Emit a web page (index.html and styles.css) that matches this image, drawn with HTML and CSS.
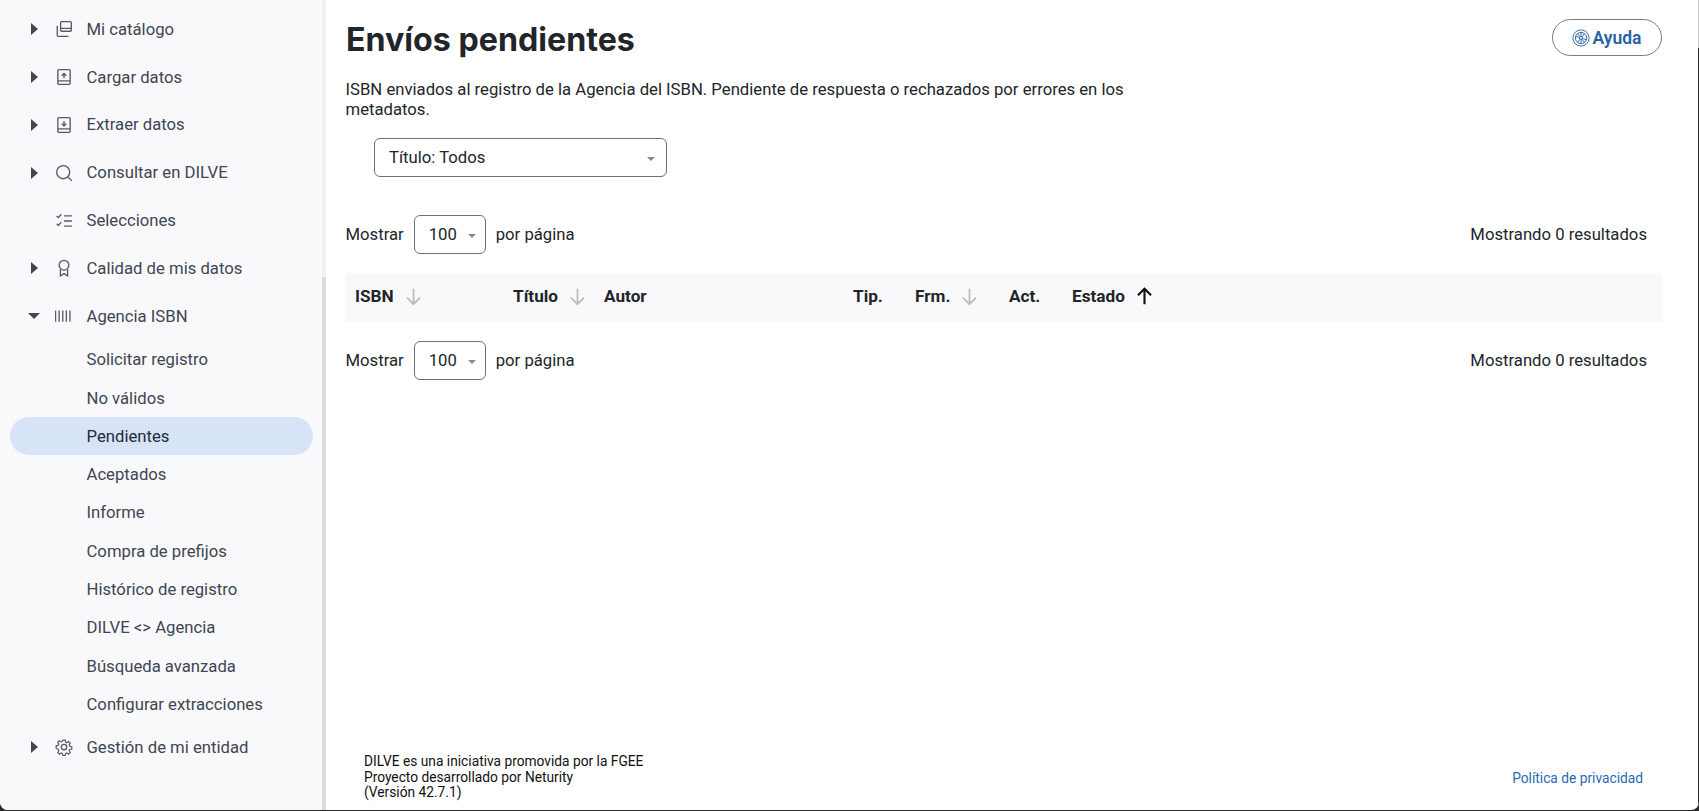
FILE: index.html
```html
<!DOCTYPE html>
<html lang="es">
<head>
<meta charset="utf-8">
<title>Envíos pendientes</title>
<link rel="stylesheet" href="styles.css">
</head>
<body>
<div class="app">
  <aside class="sidebar">
    <nav class="nav">
      <a class="item"><span class="caret"></span><svg class="icon" viewBox="0 0 16 16"><path d="M6 1.500h7.500a1 1 0 0 1 1 1v6.500a1 1 0 0 1-1 1H6a1 1 0 0 1-1-1V2.500a1 1 0 0 1 1-1zM5 7.500h9.500M2 5v8.500a1 1 0 0 0 1 1h9"/></svg><span>Mi catálogo</span></a>
      <a class="item"><span class="caret"></span><svg class="icon" viewBox="0 0 16 16"><path d="M3.500 1.500h9a1 1 0 0 1 1 1v11a1 1 0 0 1-1 1h-9a1 1 0 0 1-1-1v-11a1 1 0 0 1 1-1zM2.500 11.500h11M8 9V5M6 6.800 8 4.800l2 2"/></svg><span>Cargar datos</span></a>
      <a class="item"><span class="caret"></span><svg class="icon" viewBox="0 0 16 16"><path d="M3.500 1.500h9a1 1 0 0 1 1 1v11a1 1 0 0 1-1 1h-9a1 1 0 0 1-1-1v-11a1 1 0 0 1 1-1zM2.500 11.500h11M8 4.500v4M6 6.800l2 2 2-2"/></svg><span>Extraer datos</span></a>
      <a class="item"><span class="caret"></span><svg class="icon" viewBox="0 0 16 16"><circle cx="7.300" cy="7.300" r="5.800"/><path d="m11.500 11.500 3.500 3.500"/></svg><span>Consultar en DILVE</span></a>
      <a class="item"><span class="caret caret-none"></span><svg class="icon" viewBox="0 0 16 16"><path d="M1.500 3.500 3 5l2.500-3M1.500 10.500 3 12l2.500-3M8 3.500h7M8 8h7M8 12.500h7"/></svg><span>Selecciones</span></a>
      <a class="item"><span class="caret"></span><svg class="icon" viewBox="0 0 16 16"><circle cx="8" cy="5.500" r="4.300"/><path d="M4.800 9v6l3.200-2 3.200 2V9"/></svg><span>Calidad de mis datos</span></a>
      <a class="item"><span class="caret caret-open"></span><svg class="icon" viewBox="0 0 16 16"><path d="M.5 3v10M3.700 3v10M6.900 3v10M10.100 3v10M13.300 3v10"/></svg><span>Agencia ISBN</span></a>
      <ul class="sublist">
        <li class="subitem">Solicitar registro</li>
        <li class="subitem">No válidos</li>
        <li class="subitem active">Pendientes</li>
        <li class="subitem">Aceptados</li>
        <li class="subitem">Informe</li>
        <li class="subitem">Compra de prefijos</li>
        <li class="subitem">Histórico de registro</li>
        <li class="subitem">DILVE &lt;&gt; Agencia</li>
        <li class="subitem">Búsqueda avanzada</li>
        <li class="subitem">Configurar extracciones</li>
      </ul>
      <a class="item"><span class="caret"></span><svg class="icon" viewBox="0 0 16 16"><circle cx="8" cy="8" r="2.400"/><path d="M6.800 1h2.400l.4 2.100 1.300.6 1.800-1.200 1.700 1.700-1.200 1.800.6 1.300 2.100.4v2.400l-2.100.4-.6 1.300 1.200 1.800-1.700 1.700-1.800-1.200-1.300.6-.4 2.100H6.800l-.4-2.100-1.300-.6-1.800 1.200-1.700-1.700 1.200-1.800-.6-1.300L0 9.200V6.800l2.100-.4.600-1.300-1.200-1.800 1.700-1.700 1.800 1.200 1.300-.6z" transform="translate(1 1) scale(.875)"/></svg><span>Gestión de mi entidad</span></a>
    </nav>
    <div class="scrollbar"><div class="thumb"></div></div>
  </aside>
  <main class="main">
    <div class="content">
      <header class="head">
        <h1 class="title">Envíos pendientes</h1>
        <a class="help"><svg class="help-icon" viewBox="0 0 16 16"><circle cx="8" cy="8" r="7.200"/><circle cx="8" cy="8" r="5"/><circle cx="8" cy="8" r="1.300"/><path d="M8 3v3.700M8 9.300V13M3.200 6.500l3.600 1.100M9.200 8.400l3.600 1.100M5 12l2.200-3M8.800 7 11 4M5 4l2.200 3M8.800 9l2.200 3"/></svg>Ayuda</a>
      </header>
      <p class="desc">ISBN enviados al registro de la Agencia del ISBN. Pendiente de respuesta o rechazados por errores en los metadatos.</p>
      <div class="filter"><div class="select select-wide"><span>Título: Todos</span><i class="arrow"></i></div></div>
      <div class="pager pager-top">
        <span>Mostrar</span><div class="select select-small"><span>100</span><i class="arrow"></i></div><span>por página</span>
        <span class="count">Mostrando 0 resultados</span>
      </div>
      <div class="thead">
        <div class="th">ISBN<svg class="sort" viewBox="0 0 16 16"><path d="M8 1.500v13M2.500 9 8 14.500 13.500 9"/></svg></div>
        <div class="th">Título<svg class="sort" viewBox="0 0 16 16"><path d="M8 1.500v13M2.500 9 8 14.500 13.500 9"/></svg></div>
        <div class="th">Autor</div>
        <div class="th">Tip.</div>
        <div class="th">Frm.<svg class="sort" viewBox="0 0 16 16"><path d="M8 1.500v13M2.500 9 8 14.500 13.500 9"/></svg></div>
        <div class="th">Act.</div>
        <div class="th">Estado<svg class="sort sort-on" viewBox="0 0 16 16"><path d="M8 14.500v-13M2.500 7 8 1.500 13.500 7"/></svg></div>
      </div>
      <div class="pager pager-bottom">
        <span>Mostrar</span><div class="select select-small"><span>100</span><i class="arrow"></i></div><span>por página</span>
        <span class="count">Mostrando 0 resultados</span>
      </div>
    </div>
    <footer class="footer">
      <div class="credits">DILVE es una iniciativa promovida por la FGEE<br>Proyecto desarrollado por Neturity<br>(Versión 42.7.1)</div>
      <a class="privacy">Política de privacidad</a>
    </footer>
  </main>
</div>
</body>
</html>
```
FILE: styles.css
```css
* { box-sizing: border-box; }
html, body { margin: 0; height: 811px; overflow: hidden; background: #2b2b2b; }
body { font-family: Roboto, "Liberation Sans", sans-serif; font-size: 16.700px; color: #212529; }
.app { position: relative; display: flex; height: 810px; width: 1699px; background: #fff; border-radius: 0 0 8px 8px; overflow: hidden; }
.app::after { content: ""; position: absolute; top: 0; right: 0; bottom: 0; width: 1px; background: linear-gradient(#c4c4c4 48px, #2b2b2b 48px); }
.sidebar { flex: 0 0 326px; display: flex; background: #f9f9fc; }
.nav { flex: 1; padding: 5.500px 0 0 10px; color: #3f4652; }
.item { display: flex; align-items: center; height: 47.800px; }
.caret { width: 0; height: 0; margin-left: 21px; margin-right: 17px; border-left: 7px solid #3f4652; border-top: 6px solid transparent; border-bottom: 6px solid transparent; }
.caret-none { border-color: transparent; }
.caret-open { margin-left: 18px; margin-right: 15px; border-left: 6px solid transparent; border-right: 6px solid transparent; border-top: 6px solid #3f4652; border-bottom: 0; }
.icon { width: 18px; height: 18px; margin-right: 13.500px; fill: none; stroke: #555b65; stroke-width: 1.200; }
.sublist { list-style: none; margin: .5px 0 0; padding: 0; width: 303px; }
.subitem { height: 38.300px; padding-left: 76.500px; display: flex; align-items: center; }
.active { background: #d7e4f7; border-radius: 19px; color: #212b3a; }
.scrollbar { flex: 0 0 4px; background: #f1f1f3; display: flex; flex-direction: column; justify-content: flex-end; }
.thumb { height: 533px; background: #dadada; }
.main { flex: 1; display: flex; flex-direction: column; min-width: 0; padding: 0 37px 0 19px; }
.content { flex: 1; }
.head { display: flex; justify-content: space-between; align-items: flex-start; height: 78px; padding-top: 19px; }
.title { margin: 1px 0 0 1px; font-family: Inter, Roboto, sans-serif; font-size: 32.200px; font-weight: 700; line-height: 39px; }
.help { display: flex; align-items: center; justify-content: center; gap: 3px; width: 110px; height: 37px; padding-right: 1px; border: 1px solid #7a7a85; border-radius: 19px; color: #2563a5; font-size: 17.500px; font-weight: 600; }
.help-icon { width: 18px; height: 18px; fill: none; stroke: #2563a5; stroke-width: .8; }
.desc { margin: 2px 0 0 .5px; width: 790px; line-height: 20px; }
.filter { margin-top: 18px; padding-left: 29px; }
.select { display: flex; align-items: center; height: 39px; border: 1px solid #6e7079; border-radius: 6px; background: #fff; }
.select-wide { width: 293px; padding: 0 11px 0 14px; justify-content: space-between; }
.select-small { width: 72px; padding: 0 9px 0 14px; justify-content: space-between; margin: 0 10px; }
.arrow { width: 0; height: 0; border-left: 4px solid transparent; border-right: 4px solid transparent; border-top: 4px solid #8a8a8a; margin-top: 2px; }
.pager { display: flex; align-items: center; padding: 0 15px 0 .5px; }
.pager-top { margin-top: 38px; }
.pager-bottom { margin-top: 19px; }
.count { margin-left: auto; }
.thead { display: grid; grid-template-columns: 158px 91px 249px 62px 94px 63px 1fr; height: 49px; margin-top: 19px; background: #f9f9fc; font-size: 17.200px; font-weight: 700; }
.th { display: flex; align-items: center; padding: 0 0 3px 10px; }
.sort { width: 19px; height: 19px; margin-left: 10px; fill: none; stroke: #bcbcbc; stroke-width: 1.500; }
.sort-on { stroke: #111; stroke-width: 1.800; }
.footer { display: flex; justify-content: space-between; align-items: center; height: 57px; padding: 0 19px 2px 19px; margin-bottom: 3px; }
.credits { font-size: 13.750px; line-height: 15.500px; color: #111; }
.privacy { font-size: 13.750px; color: #2a6ab5; }
```
